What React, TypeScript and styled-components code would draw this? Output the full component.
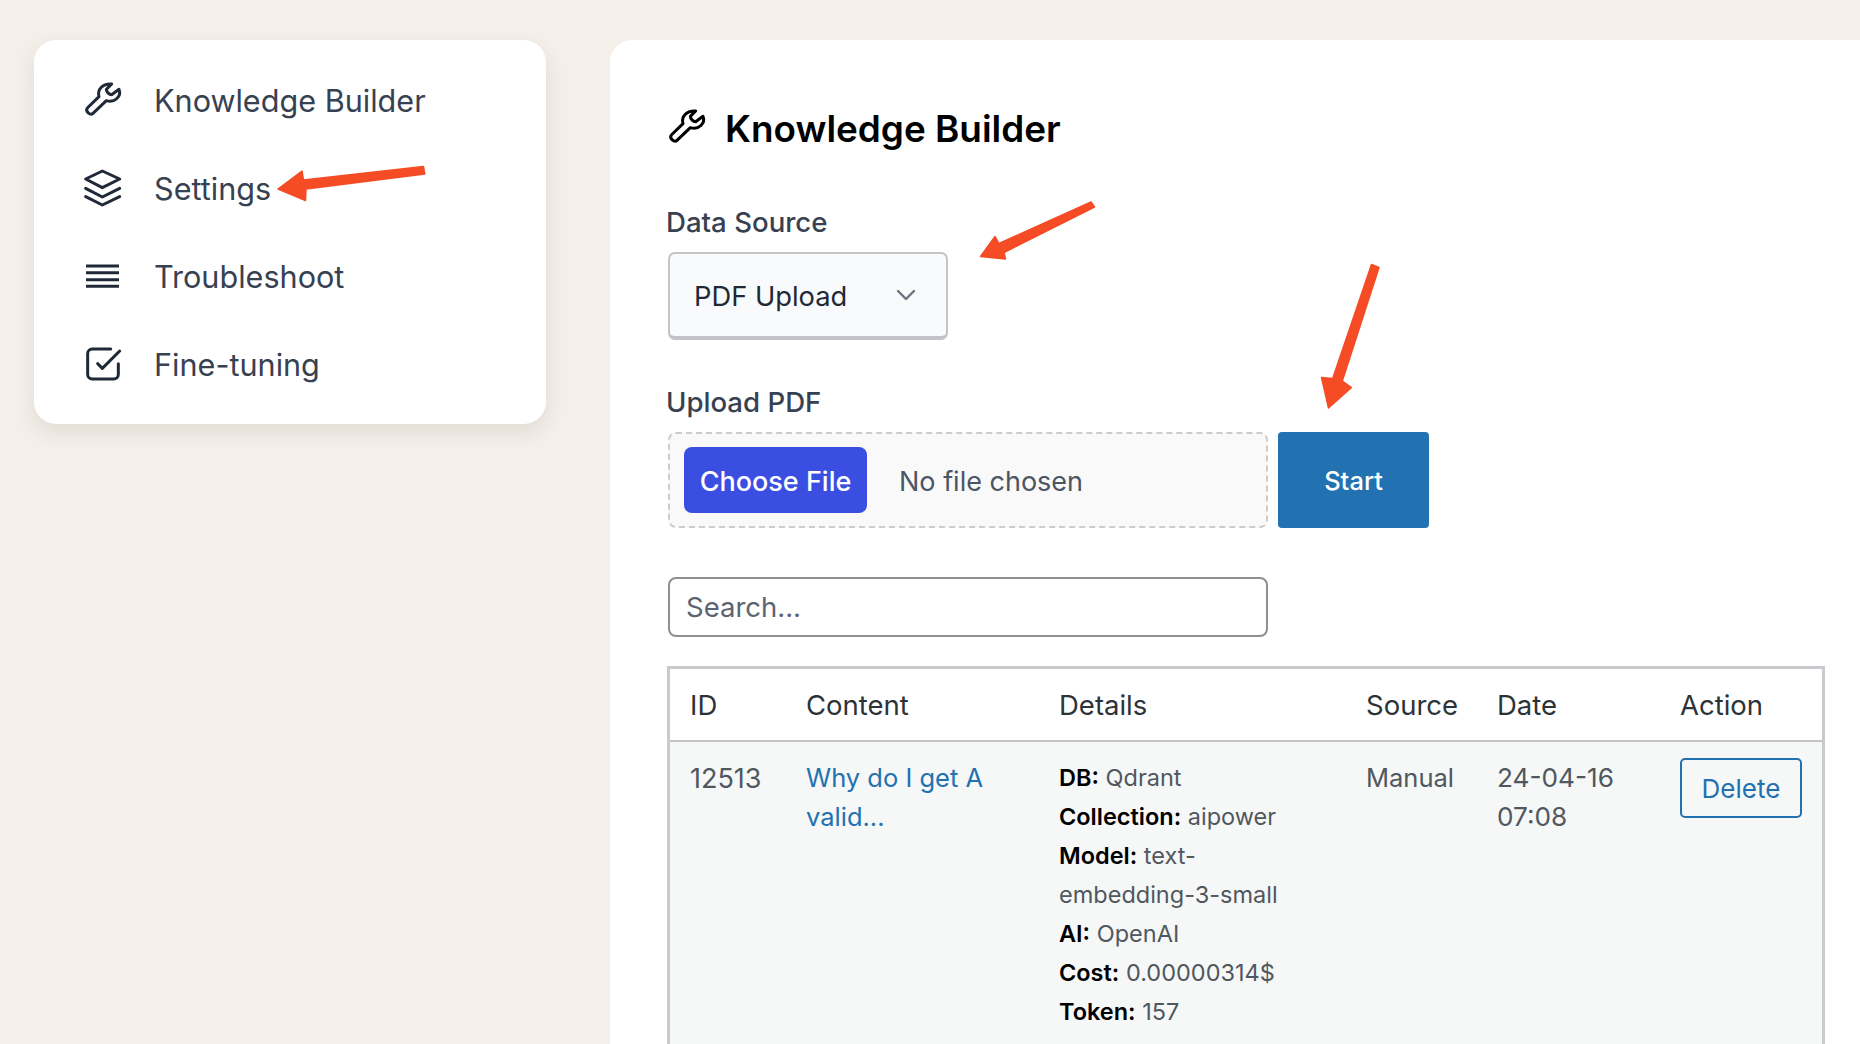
import React from "react";
import styled, { createGlobalStyle } from "styled-components";

const Global = createGlobalStyle`
  html, body { margin: 0; padding: 0; height: 100%; overflow: hidden; background: #f4efe9; }
  body { font-family: Inter, "Liberation Sans", sans-serif; }
  * { box-sizing: border-box; }
`;

const Page = styled.div`
  position: relative;
  display: flex;
  align-items: flex-start;
  gap: 64px;
  width: 1860px;
  height: 1044px;
  padding: 40px 0 0 34px;
  overflow: hidden;
`;

const Sidebar = styled.nav`
  flex: none;
  display: flex;
  flex-direction: column;
  width: 512px;
  height: 384px;
  padding: 17px 48px 0 49px;
  background: #fff;
  border-radius: 22px;
  box-shadow: 0 8px 20px rgba(60, 50, 30, 0.1);
`;

const NavItem = styled.a`
  display: flex;
  align-items: center;
  gap: 31px;
  height: 88px;
  font-size: 30.6px;
  line-height: 40px;
  color: #374151;
`;

const Icon = styled.svg`
  flex: none;
  width: 40px;
  height: 40px;
  fill: none;
  stroke: currentColor;
  stroke-width: 9;
  stroke-linecap: round;
  stroke-linejoin: round;
`;

const NavIcon = styled(Icon)<{ $butt?: boolean }>`
  color: #1f2937;
  stroke-linecap: ${(p) => (p.$butt ? "butt" : "round")};
`;

const Main = styled.main`
  flex: 1;
  height: 1100px;
  padding: 66px 34px 0 56px;
  background: #fff;
  border-radius: 22px 0 0 0;
`;

const Title = styled.h1`
  display: flex;
  align-items: center;
  gap: 18px;
  height: 44px;
  margin: 0 0 0 1px;
  font-size: 36.9px;
  font-weight: 600;
  color: #000;
`;

const FieldLabel = styled.label<{ $top: number }>`
  display: block;
  margin-top: ${(p) => p.$top}px;
  font-size: 27.6px;
  line-height: 36px;
  font-weight: 500;
  color: #374151;
`;

const Select = styled.div`
  display: flex;
  align-items: center;
  justify-content: space-between;
  width: 280px;
  height: 88px;
  margin: 12px 0 0 2px;
  padding: 2px 28px 0 24px;
  font-size: 27.3px;
  color: #1f2937;
  background: #f9fafb;
  border: 2px solid #c3c4c7;
  border-bottom-width: 4px;
  border-radius: 7px;
`;

const Chevron = styled.svg`
  width: 24px;
  height: 24px;
  margin-top: -3px;
  fill: none;
  stroke: #6b7280;
  stroke-width: 2.400;
  stroke-linecap: round;
  stroke-linejoin: round;
`;

const UploadRow = styled.div`
  display: flex;
  gap: 10px;
  margin: 12px 0 0 2px;
`;

const DropZone = styled.div`
  display: flex;
  align-items: center;
  gap: 32px;
  width: 600px;
  height: 96px;
  padding: 0 14px;
  background: #f9f9f9;
  border: 2px dashed #cccccc;
  border-radius: 8px;
`;

const ChooseButton = styled.button`
  width: 183px;
  height: 66px;
  padding: 2px 0 0;
  font: inherit;
  font-size: 27px;
  font-weight: 500;
  color: #fff;
  background: #3b4ee2;
  border: 0;
  border-radius: 8px;
`;

const NoFile = styled.span`
  padding-top: 2px;
  font-size: 27px;
  color: #4b5563;
`;

const StartButton = styled.button`
  width: 151px;
  height: 96px;
  padding: 0;
  font: inherit;
  font-size: 25.5px;
  font-weight: 500;
  color: #fff;
  background: #2271b1;
  border: 0;
  border-radius: 4px;
`;

const Search = styled.div`
  display: flex;
  align-items: center;
  width: 600px;
  height: 60px;
  margin: 49px 0 0 2px;
  padding: 0 16px;
  font-size: 27.5px;
  color: #5b6470;
  background: #fff;
  border: 2px solid #8c8f94;
  border-radius: 8px;
`;

const Table = styled.table`
  width: 1158px;
  margin: 29px 0 0 1px;
  border-collapse: separate;
  border-spacing: 0;
  table-layout: fixed;
  border: 3px solid #c9cacd;
  background: #f6f7f7;
`;

const HeadCell = styled.th`
  height: 73px;
  padding: 1px 0 0 20px;
  font-size: 27.5px;
  font-weight: 400;
  text-align: left;
  color: #2c3338;
  background: #fff;
  border-bottom: 2px solid #c3c4c7;
`;

const Cell = styled.td<{ $size?: number }>`
  padding: ${(p) => (p.$size ? 16 : 17)}px 20px 40px 20px;
  font-size: ${(p) => p.$size ?? 27}px;
  line-height: 39px;
  vertical-align: top;
  color: #50575e;
`;

const ContentLink = styled.a`
  color: #2271b1;
`;

const DetailLine = styled.div`
  position: relative;
  top: -1px;
  font-size: 23.5px;
`;

const DetailKey = styled.strong`
  font-weight: 600;
  color: #000;
`;

const DeleteButton = styled.button`
  display: block;
  width: 122px;
  height: 60px;
  margin-top: -1px;
  padding: 0;
  font: inherit;
  font-size: 26px;
  color: #2271b1;
  background: transparent;
  border: 2px solid #2271b1;
  border-radius: 5px;
`;

const Arrows = styled.svg`
  position: absolute;
  left: 0;
  top: 0;
  width: 1860px;
  height: 1044px;
  pointer-events: none;
`;

const wrench = "M35 114L70 80C64 60 80 40 108 42L92 58C92 65 100 74 108 74L130 58C138 78 118 100 92 92L52 130C44 138 28 124 35 114Z";
const box = "22 33 120 120";

const nav = [
  {
    label: "Knowledge Builder",
    icon: (
      <NavIcon viewBox={box}>
        <path d={wrench} />
      </NavIcon>
    ),
  },
  {
    label: "Settings",
    icon: (
      <NavIcon viewBox="22 32 120 120">
        <path d="M80 38L132 62L80 88L30 62ZM30 90L80 116L132 90M30 115L80 140L132 115" />
      </NavIcon>
    ),
  },
  {
    label: "Troubleshoot",
    icon: (
      <NavIcon viewBox="22 32 120 120" $butt>
        <path d="M31 59H130M31 79H130M31 100H130M31 120H130" />
      </NavIcon>
    ),
  },
  {
    label: "Fine-tuning",
    icon: (
      <NavIcon viewBox="22 32 120 120">
        <path d="M105 44H50a14 14 0 0 0-14 14V120a14 14 0 0 0 14 14H114a14 14 0 0 0 14-14V88" />
        <path d="M66 88L80 102L132 50" />
      </NavIcon>
    ),
  },
];

const details: [string, string][] = [
  ["DB:", "Qdrant"],
  ["Collection:", "aipower"],
  ["Model:", "text-embedding-3-small"],
  ["AI:", "OpenAI"],
  ["Cost:", "0.00000314$"],
  ["Token:", "157"],
];

const columns: [string, number][] = [
  ["ID", 116],
  ["Content", 253],
  ["Details", 307],
  ["Source", 131],
  ["Date", 183],
  ["Action", 162],
];

export default function App() {
  return (
    <>
      <Global />
      <Page>
        <Sidebar>
          {nav.map((n) => (
            <NavItem key={n.label}>
              {n.icon}
              {n.label}
            </NavItem>
          ))}
        </Sidebar>
        <Main>
          <Title>
            <Icon viewBox={box}>
              <path d={wrench} />
            </Icon>
            Knowledge Builder
          </Title>
          <FieldLabel $top={54}>Data Source</FieldLabel>
          <Select>
            PDF Upload
            <Chevron viewBox="0 0 24 24">
              <path d="M4 8l8 8 8-8" />
            </Chevron>
          </Select>
          <FieldLabel $top={44}>Upload PDF</FieldLabel>
          <UploadRow>
            <DropZone>
              <ChooseButton>Choose File</ChooseButton>
              <NoFile>No file chosen</NoFile>
            </DropZone>
            <StartButton>Start</StartButton>
          </UploadRow>
          <Search>Search...</Search>
          <Table>
            <colgroup>
              {columns.map(([name, w]) => (
                <col key={name} width={w} />
              ))}
            </colgroup>
            <thead>
              <tr>
                {columns.map(([name]) => (
                  <HeadCell key={name}>{name}</HeadCell>
                ))}
              </tr>
            </thead>
            <tbody>
              <tr>
                <Cell>12513</Cell>
                <Cell $size={25.5}>
                  <ContentLink>Why do I get A valid...</ContentLink>
                </Cell>
                <Cell>
                  {details.map(([k, v]) => (
                    <DetailLine key={k}>
                      <DetailKey>{k}</DetailKey> {v}
                    </DetailLine>
                  ))}
                </Cell>
                <Cell $size={25.5}>Manual</Cell>
                <Cell $size={26.2}>24-04-16 07:08</Cell>
                <Cell>
                  <DeleteButton>Delete</DeleteButton>
                </Cell>
              </tr>
            </tbody>
          </Table>
        </Main>
        <Arrows viewBox="0 0 1860 1044">
          <g fill="#f54c26" stroke="#f54c26" strokeWidth="1.500" strokeLinejoin="round">
            <path d="M278 189L302 171L303.500 180L423.400 166.500L424.800 174L306 189L305.500 200.500Z" />
            <path d="M980.500 256.500L995 236.500L999 243.500L1091 202L1094.500 207L1004 252.500L1005.500 259Z" />
            <path d="M1328.500 408L1321.500 377.500L1332.700 378.500L1371.500 264.500L1379 267.500L1342.300 381L1351.500 387.500Z" />
          </g>
        </Arrows>
      </Page>
    </>
  );
}
